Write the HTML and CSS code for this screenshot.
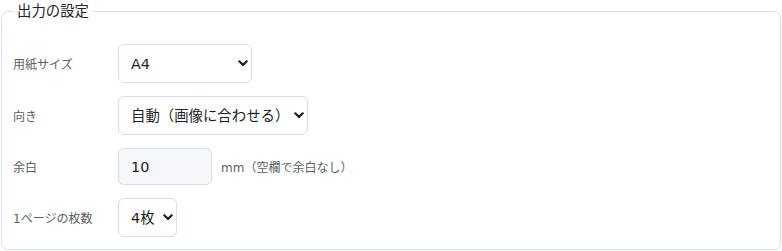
FILE: index.html
```html
<!DOCTYPE html>
<html lang="ja">
<head>
<meta charset="utf-8">
<link rel="stylesheet" href="styles.css">
</head>
<body>
<fieldset class="panel">
  <legend class="panel-title">出力の設定</legend>
  <div class="rows">
    <div class="row">
      <label class="label">用紙サイズ</label>
      <div class="select-wrap w-paper">
        <select class="control select">
          <option>A4</option>
          <option>A3</option>
          <option>B5</option>
          <option>Letter</option>
        </select>
        <svg class="chevron" viewBox="0 0 10 7" width="10" height="7" aria-hidden="true"><path d="M1.3 1.3 L5 5 L8.7 1.3" fill="none" stroke="#1b1f24" stroke-width="2.2" stroke-linecap="round" stroke-linejoin="round"/></svg>
      </div>
    </div>
    <div class="row">
      <label class="label">向き</label>
      <div class="select-wrap w-orient">
        <select class="control select">
          <option>自動（画像に合わせる）</option>
          <option>縦</option>
          <option>横</option>
        </select>
        <svg class="chevron" viewBox="0 0 10 7" width="10" height="7" aria-hidden="true"><path d="M1.3 1.3 L5 5 L8.7 1.3" fill="none" stroke="#1b1f24" stroke-width="2.2" stroke-linecap="round" stroke-linejoin="round"/></svg>
      </div>
    </div>
    <div class="row">
      <label class="label">余白</label>
      <input class="control input w-margin" type="text" value="10">
      <span class="hint">mm（空欄で余白なし）</span>
    </div>
    <div class="row">
      <label class="label">1ページの枚数</label>
      <div class="select-wrap w-count">
        <select class="control select">
          <option>4枚</option>
          <option>1枚</option>
          <option>2枚</option>
        </select>
        <svg class="chevron" viewBox="0 0 10 7" width="10" height="7" aria-hidden="true"><path d="M1.3 1.3 L5 5 L8.7 1.3" fill="none" stroke="#1b1f24" stroke-width="2.2" stroke-linecap="round" stroke-linejoin="round"/></svg>
      </div>
    </div>
  </div>
</fieldset>
</body>
</html>
```
FILE: styles.css
```css
html, body {
  margin: 0;
  padding: 0;
  background: #ffffff;
}
body {
  font-family: "DejaVu Sans", "Noto Sans CJK JP", sans-serif;
  color: #1f2328;
}
.panel {
  margin: 0 1px;
  padding: 22px 11px 12px 11px;
  border: 1px solid #d6dee8;
  border-radius: 7px;
  height: 250px;
  box-sizing: border-box;
}
.panel-title {
  padding: 0 4px;
  font-size: 14.4px;
  line-height: 22px;
  color: #1f2328;
}
.rows {
  display: flex;
  flex-direction: column;
  gap: 13px;
}
.row {
  display: flex;
  align-items: center;
}
.label {
  width: 105px;
  flex: none;
  font-size: 12px;
  color: #5a5f66;
}
.control {
  box-sizing: border-box;
  height: 39px;
  border: 1px solid #d6dde6;
  border-radius: 6px;
  font-family: "DejaVu Sans", "Noto Sans CJK JP", sans-serif;
  font-size: 14.4px;
  color: #1b1f24;
  padding: 0 20px 0 12px;
  background-color: #ffffff;
  margin: 0;
}
.select-wrap {
  position: relative;
  flex: none;
  display: flex;
}
.select {
  appearance: none;
  -webkit-appearance: none;
  width: 100%;
}
.chevron {
  position: absolute;
  right: 4px;
  top: 16px;
  pointer-events: none;
}
.input {
  background-color: #f5f7fa;
  height: 37px;
}
.w-paper { width: 134px; }
.w-orient { width: 190px; }
.w-margin { width: 94px; }
.w-count { width: 59px; }
.hint {
  margin-left: 9px;
  font-size: 12px;
  color: #5a5f66;
}
```
